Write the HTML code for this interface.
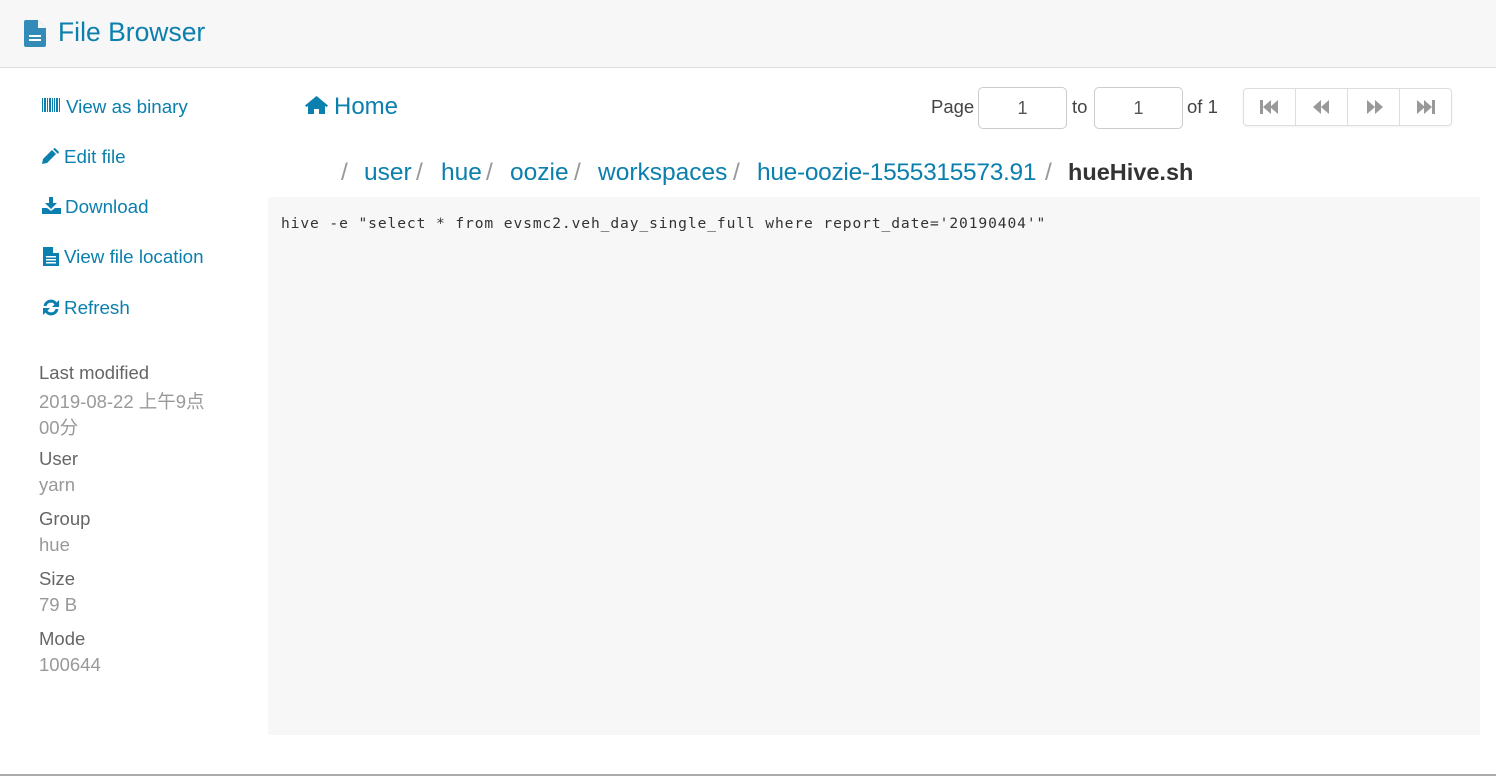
<!DOCTYPE html>
<html><head><meta charset="utf-8"><style>
*{margin:0;padding:0;box-sizing:border-box}
body{width:1496px;height:779px;position:relative;background:#fff;font-family:"Liberation Sans","Noto Sans CJK SC",sans-serif;overflow:hidden}
.a{position:absolute;white-space:nowrap}
.hdr{position:absolute;left:0;top:0;width:1496px;height:68px;background:#f7f7f7;border-bottom:1px solid #dcdcdc}
.lk{color:#0b7fad;font-size:18.8px}
.lbl{color:#666;font-size:18.5px}
.val{color:#999;font-size:18.5px}
.bc{position:absolute;top:159px;color:#0b7fad;font-size:24.5px;white-space:nowrap}
.sl{position:absolute;top:159px;color:#999;font-size:24.5px}
.inp{position:absolute;top:87px;width:89px;height:42px;border:1px solid #ccc;border-radius:5px;font-size:18px;color:#555;text-align:center;line-height:40px}
.pg{position:absolute;top:88px;left:1243px;width:209px;height:38px;border:1px solid #ddd;border-radius:4px;display:flex;box-shadow:0 1px 2px rgba(0,0,0,.05)}
.pg div{flex:1;border-right:1px solid #ddd;display:flex;align-items:center;justify-content:center}
.pg div:last-child{border-right:none}
</style></head><body>
<div class="hdr"></div>
<svg class="a" style="left:24px;top:20px" width="22" height="27" viewBox="0 0 22 27"><path d="M2 0h12l8 8v17a2 2 0 0 1-2 2H2a2 2 0 0 1-2-2V2a2 2 0 0 1 2-2z" fill="#338bb8"/><path d="M14 0v8h8z" fill="#f7f7f7"/><rect x="5" y="15" width="12" height="2" fill="#fff"/><rect x="5" y="19" width="12" height="2" fill="#fff"/></svg>
<div class="a" style="left:58px;top:17px;font-size:26.5px;color:#0b7fad">File Browser</div>

<svg class="a" style="left:42px;top:98px" width="20" height="14"><g fill="#0b7fad"><rect x="0" width="1" height="14"/><rect x="2" width="2" height="14"/><rect x="5" width="1" height="14"/><rect x="7" width="2" height="14"/><rect x="10" width="1" height="14"/><rect x="12" width="1" height="14"/><rect x="14" width="2" height="14"/><rect x="17" width="1" height="14"/></g></svg>
<div class="a lk" style="left:66px;top:96px">View as binary</div>
<svg class="a" style="left:42px;top:148px" width="18" height="16" viewBox="0 0 18 16"><path d="M0 16l1-5 9-9 4 4-9 9zM11 1l2-1 4 4-1 2z" fill="#0b7fad"/></svg>
<div class="a lk" style="left:64px;top:146px">Edit file</div>
<svg class="a" style="left:42px;top:197px" width="19" height="17" viewBox="0 0 19 17"><path d="M7 0h4v6h4l-6 6-6-6h4z M0 11h5l4 3 4-3h6v6H0z" fill="#0b7fad"/></svg>
<div class="a lk" style="left:65px;top:196px">Download</div>
<svg class="a" style="left:43px;top:247px" width="16" height="19" viewBox="0 0 16 19"><path d="M0 0h10l6 6v13H0z" fill="#0b7fad"/><path d="M10 0v6h6z" fill="#fff"/><g fill="#fff"><rect x="3" y="9" width="10" height="1.5"/><rect x="3" y="12" width="10" height="1.5"/><rect x="3" y="15" width="10" height="1.5"/></g></svg>
<div class="a lk" style="left:64px;top:246px">View file location</div>
<svg class="a" style="left:42px;top:299px" width="18" height="17" viewBox="0 0 18 17"><g fill="none" stroke="#0b7fad" stroke-width="3"><path d="M3 7a6 6 0 0 1 11-2"/><path d="M15 10a6 6 0 0 1-11 2"/></g><path d="M17 1v7h-7z M1 16v-7h7z" fill="#0b7fad"/></svg>
<div class="a lk" style="left:64px;top:297px">Refresh</div>

<div class="a lbl" style="left:39px;top:362px">Last modified</div>
<div class="a val" style="left:39px;top:388px">2019-08-22 上午9点</div>
<div class="a val" style="left:39px;top:414px">00分</div>
<div class="a lbl" style="left:39px;top:448px">User</div>
<div class="a val" style="left:39px;top:474px">yarn</div>
<div class="a lbl" style="left:39px;top:508px">Group</div>
<div class="a val" style="left:39px;top:534px">hue</div>
<div class="a lbl" style="left:39px;top:568px">Size</div>
<div class="a val" style="left:39px;top:594px">79 B</div>
<div class="a lbl" style="left:39px;top:628px">Mode</div>
<div class="a val" style="left:39px;top:654px">100644</div>

<svg class="a" style="left:305px;top:96px" width="23" height="18" viewBox="0 0 23 18"><path d="M11.5 0L0 9.5l1.5 1.5L3 10v8h6v-5h5v5h6v-8l1.5 1 1.5-1.5z" fill="#0b7fad"/></svg>
<div class="a" style="left:334px;top:93px;font-size:24px;color:#0b7fad">Home</div>

<div class="a lbl" style="left:931px;top:96px;color:#444">Page</div>
<div class="inp" style="left:978px">1</div>
<div class="a lbl" style="left:1072px;top:96px;color:#444">to</div>
<div class="inp" style="left:1094px">1</div>
<div class="a lbl" style="left:1187px;top:96px;color:#444">of 1</div>
<div class="pg">
<div><svg width="22" height="16" viewBox="0 0 22 16" fill="#999"><rect x="1" y="1" width="3" height="14"/><path d="M4 8l8-7v14zM11 8l8-7v14z"/></svg></div>
<div><svg width="20" height="16" viewBox="0 0 20 16" fill="#999"><path d="M1 8l8-7v14zM9 8l8-7v14z"/></svg></div>
<div><svg width="20" height="16" viewBox="0 0 20 16" fill="#999"><path d="M3 1l8 7-8 7zM11 1l8 7-8 7z"/></svg></div>
<div><svg width="22" height="16" viewBox="0 0 22 16" fill="#999"><path d="M2 1l8 7-8 7zM9 1l8 7-8 7z"/><rect x="17" y="1" width="3" height="14"/></svg></div>
</div>

<div class="sl" style="left:341px">/</div>
<div class="bc" style="left:364px">user</div>
<div class="sl" style="left:416px">/</div>
<div class="bc" style="left:441px">hue</div>
<div class="sl" style="left:486px">/</div>
<div class="bc" style="left:510px">oozie</div>
<div class="sl" style="left:574px">/</div>
<div class="bc" style="left:598px">workspaces</div>
<div class="sl" style="left:733px">/</div>
<div class="bc" style="left:757px;letter-spacing:-0.3px">hue-oozie-1555315573.91</div>
<div class="sl" style="left:1045px">/</div>
<div class="bc" style="left:1068px;color:#333;font-weight:bold;font-size:23.5px">hueHive.sh</div>

<div class="a" style="left:268px;top:197px;width:1212px;height:538px;background:#f7f7f7"></div>
<div class="a" style="left:281px;top:215px;font-family:'DejaVu Sans Mono','Liberation Mono',monospace;font-size:14.6px;letter-spacing:0.9px;color:#333">hive -e "select * from evsmc2.veh_day_single_full where report_date='20190404'"</div>
<div class="a" style="left:0;top:774px;width:1496px;height:2px;background:#aaa"></div>
</body></html>
